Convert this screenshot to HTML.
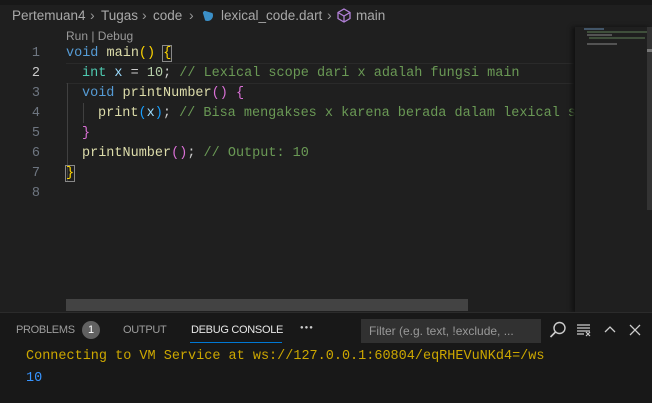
<!DOCTYPE html><html><head><style>
body{margin:0;width:652px;height:402px;background:#1f1f1f;overflow:hidden;position:relative;font-family:"Liberation Sans",sans-serif}
.a{position:absolute}
.code{font-family:"Liberation Mono",monospace;font-size:13.5px;white-space:pre;line-height:20px}
.ln{color:#6e7681;width:40px;text-align:right;left:0}
.k{color:#569cd6}.t{color:#4ec9b0}.f{color:#dcdcaa}.v{color:#9cdcfe}.n{color:#b5cea8}.c{color:#6a9955}.y{color:#ffd700}.p{color:#da70d6}.b{color:#179fff}.w{color:#cccccc}
.tab{font-size:11px;letter-spacing:-0.3px;color:#9d9d9d;top:324px}
.bc{top:8px;font-size:13.5px;color:#a9a9a9;white-space:pre}
.sep{top:7px;font-size:14px;color:#999}
</style></head><body>
<div class="a" style="left:0;top:0;width:652px;height:5px;background:#181818"></div>
<div class="a bc" style="left:12px">Pertemuan4</div>
<div class="a sep" style="left:90px">›</div>
<div class="a bc" style="left:101px">Tugas</div>
<div class="a sep" style="left:142px">›</div>
<div class="a bc" style="left:153px">code</div>
<div class="a sep" style="left:189px">›</div>
<div class="a" style="left:202px;top:10px;width:11px;height:11px;border-radius:50%;background:#3b8fc7;clip-path:polygon(0 0,100% 30%,100% 100%,30% 100%)"></div>
<div class="a bc" style="left:221px">lexical_code.dart</div>
<div class="a sep" style="left:327px">›</div>
<svg class="a" style="left:337px;top:8px" width="14" height="15" viewBox="0 0 14 15"><path d="M7 1L13 4.5V10.5L7 14L1 10.5V4.5Z M1 4.5L7 8L13 4.5 M7 8V14" fill="none" stroke="#b180d7" stroke-width="1.3"/></svg>
<div class="a bc" style="left:356px">main</div>
<div class="a" style="left:66px;top:29px;font-size:12px;color:#999">Run | Debug</div>
<div class="a" style="left:66px;top:63px;width:509px;height:19px;border-top:1px solid #2a2a2a;border-bottom:1px solid #2a2a2a"></div>
<div class="a" style="left:67px;top:83px;width:1px;height:98px;background:#404040"></div>
<div class="a" style="left:83px;top:103px;width:1px;height:20px;background:#404040"></div>
<div class="a code" style="left:0;top:44px;width:575px;height:170px"><div class="a ln" style="top:0">1</div><div class="a ln" style="top:20px;color:#ccc">2</div><div class="a ln" style="top:40px">3</div><div class="a ln" style="top:60px">4</div><div class="a ln" style="top:80px">5</div><div class="a ln" style="top:100px">6</div><div class="a ln" style="top:120px">7</div><div class="a ln" style="top:140px">8</div><div class="a" style="left:66px;top:0"><span class="k">void</span> <span class="f">main</span><span class="y">()</span> <span class="y" style="outline:1px solid #888">{</span></div><div class="a" style="left:82px;top:20px"><span class="t">int</span> <span class="v">x</span> <span class="w">=</span> <span class="n">10</span><span class="w">;</span> <span class="c">// Lexical scope dari x adalah fungsi main</span></div><div class="a" style="left:82px;top:40px"><span class="k">void</span> <span class="f">printNumber</span><span class="p">()</span> <span class="p">{</span></div><div class="a" style="left:98px;top:60px;width:477px;overflow:hidden"><span class="f">print</span><span class="b">(</span><span class="v">x</span><span class="b">)</span><span class="w">;</span> <span class="c">// Bisa mengakses x karena berada dalam lexical scope</span></div><div class="a" style="left:82px;top:80px"><span class="p">}</span></div><div class="a" style="left:82px;top:100px"><span class="f">printNumber</span><span class="p">()</span><span class="w">;</span> <span class="c">// Output: 10</span></div><div class="a" style="left:66px;top:120px"><span class="y" style="outline:1px solid #888">}</span></div></div>
<div class="a" style="left:575px;top:27px;width:77px;height:285px;background:#1f1f1f;box-shadow:-3px 0 4px #111"></div>
<div class="a" style="left:584px;top:28px;width:20px;height:2px;background:#5a7a9a;opacity:.6"></div>
<div class="a" style="left:587px;top:31px;width:60px;height:2px;background:#55704f;opacity:.6"></div>
<div class="a" style="left:587px;top:34px;width:25px;height:2px;background:#777;opacity:.6"></div>
<div class="a" style="left:589px;top:37px;width:56px;height:2px;background:#55704f;opacity:.6"></div>
<div class="a" style="left:587px;top:43px;width:30px;height:2px;background:#777;opacity:.6"></div>
<div class="a" style="left:647px;top:27px;width:5px;height:183px;background:#333"></div>
<div class="a" style="left:647px;top:49px;width:5px;height:3px;background:#777"></div>
<div class="a" style="left:66px;top:299px;width:402px;height:12px;background:#434343"></div>
<div class="a" style="left:0;top:312px;width:652px;height:90px;background:#181818;border-top:1px solid #2b2b2b"></div>
<div class="a tab" style="left:16px">PROBLEMS</div>
<div class="a" style="left:82px;top:321px;width:18px;height:18px;border-radius:50%;background:#616161;color:#fff;font-size:11px;text-align:center;line-height:18px">1</div>
<div class="a tab" style="left:123px">OUTPUT</div>
<div class="a tab" style="left:191px;color:#e7e7e7">DEBUG CONSOLE</div>
<div class="a" style="left:190px;top:342px;width:92px;height:1px;background:#0078d4"></div>
<div class="a" style="left:300px;top:325px;color:#ccc;font-size:6px;letter-spacing:1px">●●●</div>
<div class="a" style="left:361px;top:319px;width:180px;height:24px;background:#313131;box-sizing:border-box;padding:5px 8px;font-size:12px;color:#999;white-space:nowrap;overflow:hidden">Filter (e.g. text, !exclude, ...</div>
<svg class="a" style="left:548px;top:320px" width="20" height="20"><circle cx="11.5" cy="8" r="5.5" fill="none" stroke="#ccc" stroke-width="1.4"/><path d="M7.5 12L2.5 17" stroke="#ccc" stroke-width="1.6"/></svg>
<svg class="a" style="left:576px;top:322px" width="16" height="16"><path d="M1 3H14M1 6H14M1 9H14M1 12H8" stroke="#ccc" stroke-width="1.2"/><path d="M10 10L14 14M14 10L10 14" stroke="#ccc" stroke-width="1.2"/></svg>
<svg class="a" style="left:602px;top:322px" width="16" height="16"><path d="M3 10L8 5L13 10" fill="none" stroke="#ccc" stroke-width="1.3"/></svg>
<svg class="a" style="left:627px;top:322px" width="16" height="16"><path d="M3 3L13 13M13 3L3 13" stroke="#ccc" stroke-width="1.3"/></svg>
<div class="a code" style="left:26px;top:347px;color:#cca700">Connecting to VM Service at ws://127.0.0.1:60804/eqRHEVuNKd4=/ws</div>
<div class="a code" style="left:26px;top:369px;color:#3794ff">10</div>
</body></html>
